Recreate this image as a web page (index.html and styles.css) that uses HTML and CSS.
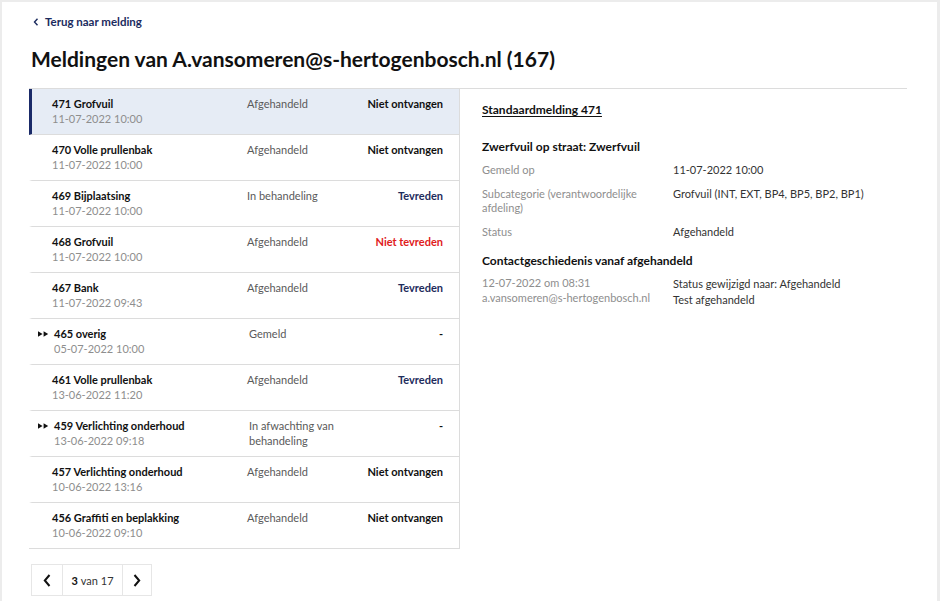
FILE: index.html
```html
<!DOCTYPE html>
<html lang="nl">
<head>
<meta charset="utf-8">
<title>Meldingen</title>
<link rel="stylesheet" href="styles.css">
</head>
<body>
<div class="page">
  <a class="back" href="#">
    <svg class="back-icon" width="6" height="8" viewBox="0 0 6 8"><path d="M4.5 0.8 L1.5 4 L4.5 7.2" fill="none" stroke="#1b2b5e" stroke-width="1.4"/></svg>
    <span>Terug naar melding</span>
  </a>
  <h1 class="title">Meldingen van A.vansomeren@s-hertogenbosch.nl (167)</h1>

  <div class="main">
    <div class="list">
      <div class="row row--active">
        <span class="icon-col"></span>
        <div class="col-main"><div class="r-title">471 Grofvuil</div><div class="r-date">11-07-2022 10:00</div></div>
        <div class="col-status">Afgehandeld</div>
        <div class="col-result">Niet ontvangen</div>
      </div>
      <div class="row">
        <span class="icon-col"></span>
        <div class="col-main"><div class="r-title">470 Volle prullenbak</div><div class="r-date">11-07-2022 10:00</div></div>
        <div class="col-status">Afgehandeld</div>
        <div class="col-result">Niet ontvangen</div>
      </div>
      <div class="row">
        <span class="icon-col"></span>
        <div class="col-main"><div class="r-title">469 Bijplaatsing</div><div class="r-date">11-07-2022 10:00</div></div>
        <div class="col-status">In behandeling</div>
        <div class="col-result good">Tevreden</div>
      </div>
      <div class="row">
        <span class="icon-col"></span>
        <div class="col-main"><div class="r-title">468 Grofvuil</div><div class="r-date">11-07-2022 10:00</div></div>
        <div class="col-status">Afgehandeld</div>
        <div class="col-result bad">Niet tevreden</div>
      </div>
      <div class="row">
        <span class="icon-col"></span>
        <div class="col-main"><div class="r-title">467 Bank</div><div class="r-date">11-07-2022 09:43</div></div>
        <div class="col-status">Afgehandeld</div>
        <div class="col-result good">Tevreden</div>
      </div>
      <div class="row row--linked">
        <span class="icon-col"><svg width="11" height="6" viewBox="0 0 11 6"><path d="M0 0.3 L4.6 3 L0 5.7Z M5.6 0.3 L10.2 3 L5.6 5.7Z" fill="#111"/></svg></span>
        <div class="col-main"><div class="r-title">465 overig</div><div class="r-date">05-07-2022 10:00</div></div>
        <div class="col-status">Gemeld</div>
        <div class="col-result">-</div>
      </div>
      <div class="row">
        <span class="icon-col"></span>
        <div class="col-main"><div class="r-title">461 Volle prullenbak</div><div class="r-date">13-06-2022 11:20</div></div>
        <div class="col-status">Afgehandeld</div>
        <div class="col-result good">Tevreden</div>
      </div>
      <div class="row row--linked">
        <span class="icon-col"><svg width="11" height="6" viewBox="0 0 11 6"><path d="M0 0.3 L4.6 3 L0 5.7Z M5.6 0.3 L10.2 3 L5.6 5.7Z" fill="#111"/></svg></span>
        <div class="col-main"><div class="r-title">459 Verlichting onderhoud</div><div class="r-date">13-06-2022 09:18</div></div>
        <div class="col-status">In afwachting van behandeling</div>
        <div class="col-result">-</div>
      </div>
      <div class="row">
        <span class="icon-col"></span>
        <div class="col-main"><div class="r-title">457 Verlichting onderhoud</div><div class="r-date">10-06-2022 13:16</div></div>
        <div class="col-status">Afgehandeld</div>
        <div class="col-result">Niet ontvangen</div>
      </div>
      <div class="row">
        <span class="icon-col"></span>
        <div class="col-main"><div class="r-title">456 Graffiti en beplakking</div><div class="r-date">10-06-2022 09:10</div></div>
        <div class="col-status">Afgehandeld</div>
        <div class="col-result">Niet ontvangen</div>
      </div>
    </div>

    <div class="detail">
      <a class="d-link" href="#">Standaardmelding 471</a>
      <h2 class="d-heading">Zwerfvuil op straat: Zwerfvuil</h2>
      <dl class="d-list">
        <div class="d-row"><dt>Gemeld op</dt><dd>11-07-2022 10:00</dd></div>
        <div class="d-row"><dt>Subcategorie (verantwoordelijke afdeling)</dt><dd>Grofvuil (INT, EXT, BP4, BP5, BP2, BP1)</dd></div>
        <div class="d-row"><dt>Status</dt><dd>Afgehandeld</dd></div>
      </dl>
      <h2 class="d-heading d-heading--contact">Contactgeschiedenis vanaf afgehandeld</h2>
      <div class="contact">
        <div class="c-meta"><div>12-07-2022 om 08:31</div><div>a.vansomeren@s-hertogenbosch.nl</div></div>
        <div class="c-text"><div>Status gewijzigd naar: Afgehandeld</div><div>Test afgehandeld</div></div>
      </div>
    </div>
  </div>

  <nav class="pager">
    <button class="pg-btn pg-prev" type="button"><svg width="8" height="13" viewBox="0 0 8 13"><path d="M6.5 1 L1.8 6.5 L6.5 12" fill="none" stroke="#111" stroke-width="2"/></svg></button>
    <div class="pg-info"><b>3</b> van 17</div>
    <button class="pg-btn pg-next" type="button"><svg width="8" height="13" viewBox="0 0 8 13"><path d="M1.5 1 L6.2 6.5 L1.5 12" fill="none" stroke="#111" stroke-width="2"/></svg></button>
  </nav>
</div>
</body>
</html>
```

FILE: styles.css
```css
* { box-sizing: border-box; }
html, body { margin: 0; padding: 0; }
body {
  background: #ececec;
  font-family: Lato, "Open Sans", "Liberation Sans", sans-serif;
  color: #111;
  font-size: 11px;
}
.page {
  background: #fff;
  margin: 2px 3px 0 2px;
  min-height: 620px;
  padding: 12px 30px 20px 27px;
}
.back {
  display: flex;
  align-items: center;
  gap: 6px;
  margin-left: 4px;
  color: #1b2b5e;
  text-decoration: none;
  font-weight: 700;
  font-size: 11.5px;
  line-height: 15px;
}
.title {
  margin: 17px 0 16px 2px;
  font-size: 21px;
  line-height: 26px;
  font-weight: 700;
  color: #111;
}
.main {
  display: flex;
  width: 878px;
  border-top: 1px solid #dcdcdc;
}
.list {
  width: 431px;
  flex: none;
  border-right: 1px solid #dcdcdc;
  border-bottom: 1px solid #dcdcdc;
}
.row {
  display: grid;
  grid-template-columns: 14px 195px 112px 1fr;
  height: 46px;
  padding: 7px 16px 0 6px;
  border-left: 3px solid transparent;
  border-bottom: 1px solid #dcdcdc;
  line-height: 15px;
}
.row:last-child { border-bottom: 0; height: 45px; }
.row--active {
  background: #e6ecf5;
  border-left-color: #1a2a68;
}
.icon-col { display: flex; align-items: center; height: 15px; }
.row--linked .col-main, .row--linked .col-status { margin-left: 2px; }
.r-title { font-weight: 700; color: #111; }
.r-date { color: #8e8e8e; }
.col-status { color: #5a5a5a; }
.col-result { text-align: right; font-weight: 700; color: #111; }
.col-result.good { color: #1e2c5c; }
.col-result.bad { color: #e0201c; }

.detail {
  flex: 1;
  padding: 13px 22px 0 22px;
}
.d-link {
  display: inline-block;
  font-weight: 700;
  font-size: 12px;
  line-height: 16px;
  color: #111;
  text-decoration: underline;
  text-underline-offset: 2px;
}
.d-heading {
  margin: 21px 0 8px;
  font-size: 12px;
  line-height: 16px;
  font-weight: 700;
  color: #111;
}
.d-heading--contact { margin: 14px 0 6px; }
.d-list { margin: 0; }
.d-row {
  display: grid;
  grid-template-columns: 191px 1fr;
  line-height: 14px;
  margin-bottom: 10px;
}
.d-row dt { color: #8e8e8e; padding-right: 20px; }
.d-row dd { margin: 0; color: #333; }
.contact {
  display: grid;
  grid-template-columns: 191px 1fr;
}
.c-meta { color: #8e8e8e; line-height: 15px; }
.c-text { color: #333; line-height: 16px; padding-top: 1px; }

.pager {
  display: flex;
  margin: 15px 0 0 2px;
  width: 121px;
  height: 32px;
  border: 1px solid #e6e6e6;
}
.pg-btn {
  border: 0;
  background: #fff;
  padding: 0;
  display: flex;
  align-items: center;
  justify-content: center;
  width: 31px;
}
.pg-prev { border-right: 1px solid #e6e6e6; }
.pg-next { border-left: 1px solid #e6e6e6; width: 29px; }
.pg-info {
  flex: 1;
  display: flex;
  align-items: center;
  justify-content: center;
  gap: 3px;
  font-size: 11px;
  color: #333;
}
.pg-info b { color: #111; }
```
